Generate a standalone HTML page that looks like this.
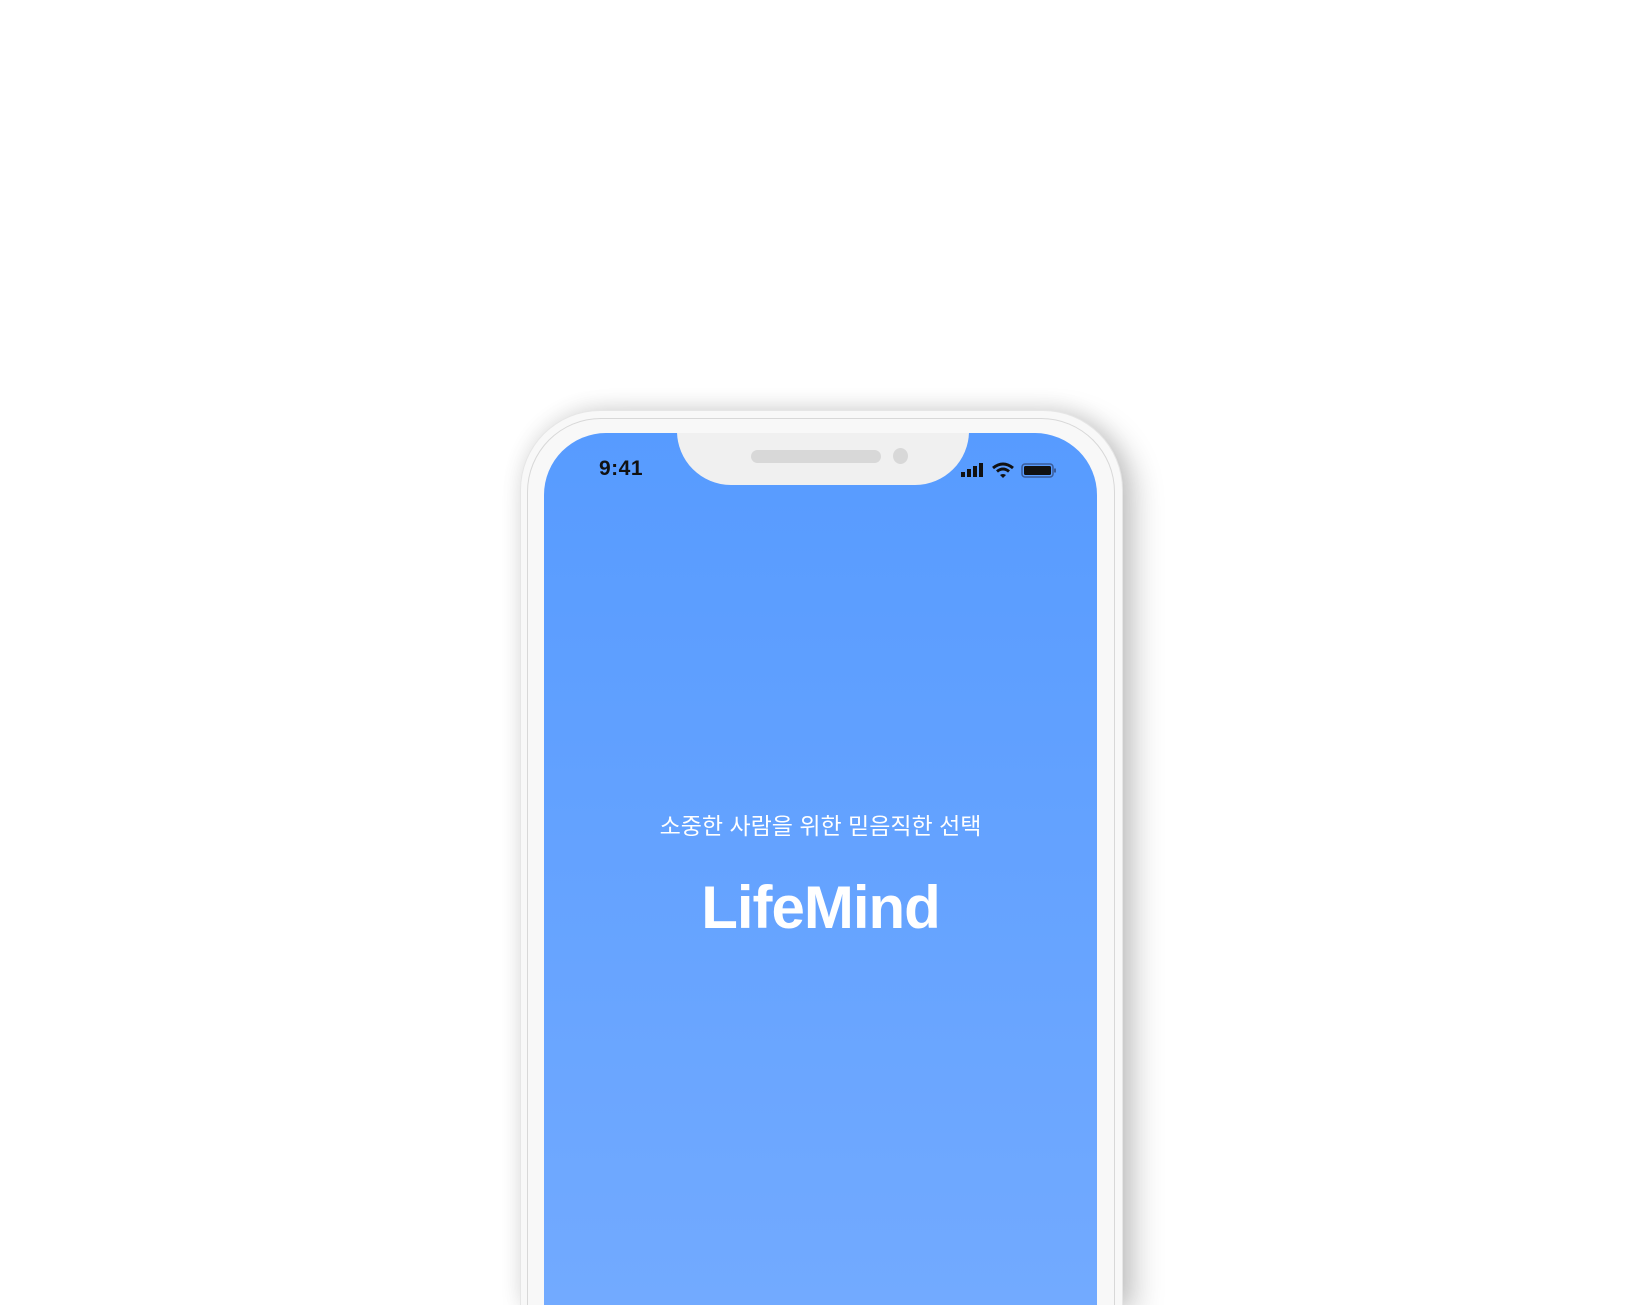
<!DOCTYPE html>
<html><head><meta charset="utf-8"><style>
html,body{margin:0;padding:0;width:1650px;height:1305px;overflow:hidden;background:#fff;font-family:"Liberation Sans","Noto Sans CJK KR",sans-serif}
.wrap{position:absolute;left:0;top:0;width:1650px;height:1305px;overflow:hidden}
.frame{position:absolute;left:520px;top:410px;width:603px;height:895px;border-radius:80px 80px 0 0;background:#f8f8f8;box-shadow:12px 8px 30px rgba(0,0,0,.22),0 -4px 20px rgba(0,0,0,.08);border:1px solid #e6e6e6;border-bottom:none;box-sizing:border-box}
.inner{position:absolute;left:527px;top:418px;width:588px;height:887px;border-radius:74px 74px 0 0;border:1px solid #d8d8d8;border-bottom:none;box-sizing:border-box}
.screen{position:absolute;left:544px;top:433px;width:553px;height:872px;border-radius:62px 62px 0 0;background:linear-gradient(#579bff,#72aaff);overflow:hidden}
.notch{position:absolute;left:133px;top:-2px;width:292px;height:54px;background:#f0f0f0;border-radius:0 0 54px 54px}
.spk{position:absolute;left:74px;top:19px;width:130px;height:13px;border-radius:7px;background:#d8d8d8}
.cam{position:absolute;left:216px;top:17px;width:15px;height:16px;border-radius:50%;background:#d8d8d8}
.time{position:absolute;left:55px;top:24px;font-size:21px;font-weight:bold;color:#111;letter-spacing:0.5px}
.tag{position:absolute;left:0;width:553px;top:374px;text-align:center;color:#fff;font-size:23px}
.logo{position:absolute;left:0;width:553px;top:440px;text-align:center;color:#fff;font-size:60px;font-weight:bold;letter-spacing:-1px}
</style></head><body><div class="wrap">
<div class="frame"></div><div class="inner"></div>
<div class="screen">
<div class="notch"><div class="spk"></div><div class="cam"></div></div>
<div class="time">9:41</div>
<svg style="position:absolute;left:416px;top:28px" width="100" height="20" viewBox="0 0 100 20">
<rect x="1" y="11" width="4" height="5" fill="#111"/><rect x="7" y="8" width="4" height="8" fill="#111"/><rect x="13" y="5" width="4" height="11" fill="#111"/><rect x="19" y="2" width="4" height="14" fill="#111"/>
<path d="M33 7 Q43 -1 53 7" stroke="#111" stroke-width="3" fill="none"/><path d="M37 10.5 Q43 5.5 49 10.5" stroke="#111" stroke-width="3" fill="none"/><path d="M40 14 L43 17 L46 14 Q43 12 40 14Z" fill="#111"/>
<rect x="62" y="3" width="31" height="13" rx="3" fill="none" stroke="#3a5c9a" stroke-width="1.5"/><rect x="64" y="5" width="27" height="9" rx="1.5" fill="#111"/><rect x="94" y="7.5" width="2" height="4" fill="#3a5c9a"/>
</svg>
<div class="tag">소중한 사람을 위한 믿음직한 선택</div>
<div class="logo">LifeMind</div>
</div>
</div></body></html>
